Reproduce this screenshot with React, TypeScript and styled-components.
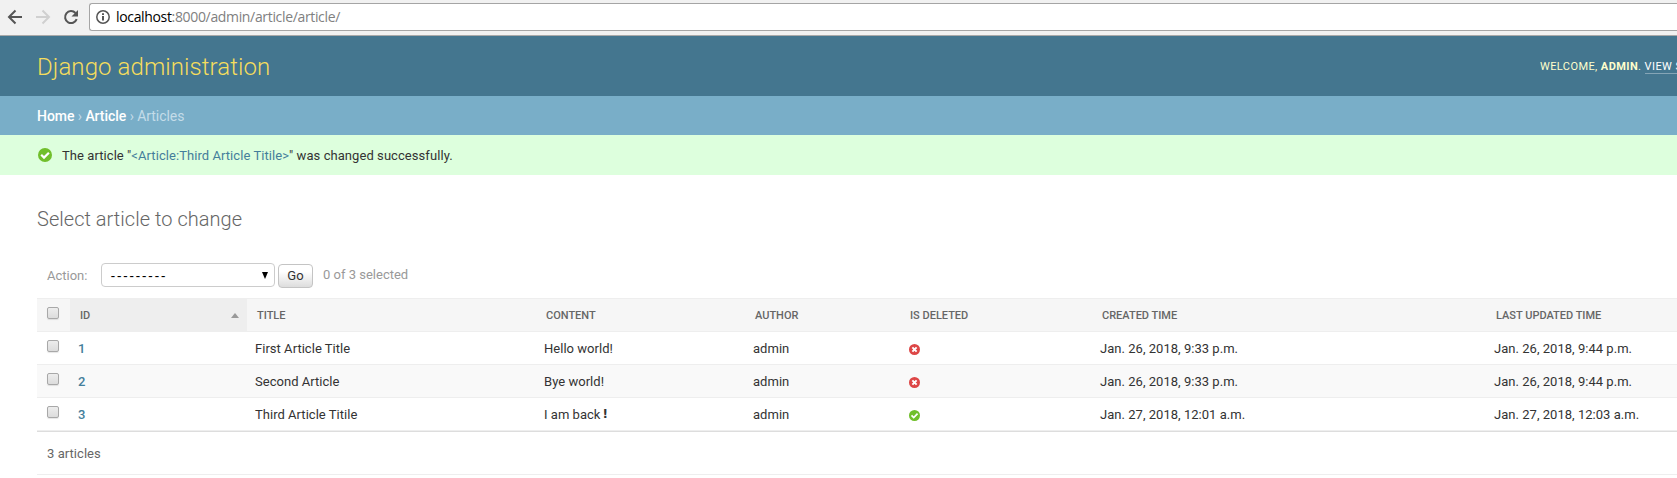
import React from 'react';
import styled, { createGlobalStyle } from 'styled-components';

const GlobalStyle = createGlobalStyle`
  * { box-sizing: border-box; }
  html, body { margin: 0; background: #fff; overflow: hidden; }
  body { font-family: Roboto, "Liberation Sans", sans-serif; font-size: 13px; color: #333; }
`;

const Page = styled.div`
  width: 1677px;
  height: 478px;
  overflow: hidden;
  background: #fff;
`;

const Toolbar = styled.div`
  display: flex;
  align-items: flex-start;
  height: 36px;
  padding: 3px 0 0 7px;
  background: #f1f1f1;
  border-bottom: 1px solid #a9a9a9;
`;

const NavIcons = styled.div`
  display: flex;
  gap: 12px;
  padding-top: 6px;
  width: 82px;
`;

const AddressBar = styled.div`
  display: flex;
  align-items: center;
  flex: 1;
  height: 28px;
  padding-left: 6px;
  background: #fff;
  border: 1px solid #a5a5a5;
  border-right: 0;
  border-radius: 3px 0 0 3px;
`;

const Url = styled.span`
  margin-left: 6px;
  font: 14px/26px "Open Sans", sans-serif;
  letter-spacing: -0.34px;
  color: #808080;
  white-space: nowrap;
`;

const Host = styled.span`
  color: #000;
`;

const Header = styled.header`
  display: flex;
  justify-content: space-between;
  height: 60px;
  padding-left: 37px;
  background: #44768f;
  color: #ffc;
`;

const Brand = styled.div`
  font-size: 24px;
  font-weight: 300;
  line-height: 62px;
  letter-spacing: 0.09px;
  color: #f5dd5d;
  white-space: nowrap;
`;

const UserTools = styled.div`
  width: 137px;
  overflow: hidden;
  padding-top: 23px;
  font-size: 11px;
  font-weight: 400;
  line-height: 15px;
  letter-spacing: 0.42px;
  white-space: nowrap;
  text-transform: uppercase;
`;

const ToolLink = styled.a`
  color: #fff;
  border-bottom: 1px solid rgba(255, 255, 255, 0.35);
`;

const Breadcrumbs = styled.nav`
  height: 39px;
  padding-left: 37px;
  background: #79aec8;
  color: #c4dce8;
  font-size: 14px;
  line-height: 40px;
  letter-spacing: -0.05px;
`;

const Crumb = styled.a`
  color: #fff;
  font-weight: 500;
`;

const Message = styled.div`
  display: flex;
  align-items: center;
  gap: 10px;
  height: 40px;
  padding-left: 38px;
  background: #dfd;
`;

const MessageText = styled.span`
  padding-top: 1px;
  line-height: 41px;
  letter-spacing: 0.065px;
`;

const MessageLink = styled.a`
  color: #447e9b;
`;

const Main = styled.main`
  padding: 32px 0 0 37px;
`;

const Title = styled.h1`
  margin: 0 0 32px;
  font-size: 20px;
  font-weight: 300;
  line-height: 24px;
  letter-spacing: 0.03px;
  color: #666;
`;

const Actions = styled.div`
  display: flex;
  align-items: flex-start;
  height: 35px;
  padding-left: 10px;
  line-height: 24px;
  color: #999;
`;

const ActionLabel = styled.label`
  width: 54px;
  padding-top: 1px;
`;

const Select = styled.div`
  display: flex;
  justify-content: space-between;
  align-items: center;
  width: 174px;
  height: 24px;
  padding: 0 6px 0 9px;
  border: 1px solid #ccc;
  border-radius: 4px;
  color: #000;
  font-size: 14px;
`;

const EmptyChoice = styled.span`
  padding-top: 1px;
  letter-spacing: 2.4px;
`;

const GoButton = styled.button`
  width: 35px;
  height: 24px;
  margin: 1px 10px 0 3px;
  padding: 0;
  border: 1px solid #c4c4c4;
  border-radius: 4px;
  background: linear-gradient(#fff 30%, #ddd);
  font: 13px/20px Roboto, sans-serif;
  color: #333;
`;

const Table = styled.div`
  border-bottom: 1px solid #ddd;
`;

const Row = styled.div<{ $alt?: boolean }>`
  display: grid;
  grid-template-columns: 33px 177px 289px 209px 155px 192px 394px 194px;
  height: 33px;
  border-bottom: 1px solid #eee;
  background: ${p => (p.$alt ? '#f9f9f9' : '#fff')};
`;

const HeadRow = styled(Row)`
  height: 34px;
  border-top: 1px solid #eee;
  background: #f6f6f6;
`;

const HeadCell = styled.div<{ $sorted?: boolean }>`
  display: flex;
  justify-content: space-between;
  align-items: center;
  padding: 1px 8px 0 10px;
  background: ${p => (p.$sorted ? '#eee' : 'transparent')};
  color: #666;
  font-size: 11px;
  font-weight: 500;
  text-transform: uppercase;
  white-space: nowrap;
`;

const Cell = styled.div`
  display: flex;
  padding: 0 8px;
  line-height: 33px;
  letter-spacing: 0.03px;
  white-space: nowrap;
`;

const IdLink = styled.a`
  color: #447e9b;
  font-weight: 500;
  font-size: 13px;
`;

const CheckCell = styled.div`
  padding: 8px 0 0 10px;
`;

const Checkbox = styled.div`
  width: 12px;
  height: 12px;
  border: 1px solid #a8a8a8;
  border-radius: 2px;
  background: linear-gradient(#ededed, #dcdcdc);
  box-shadow: 0 1px 1px rgba(0, 0, 0, 0.1);
`;

const IconCell = styled.div`
  padding: 12px 0 0 9px;
`;

const Icon = styled.svg`
  display: block;
  flex: none;
`;

const Bang = styled.span`
  margin-left: 2px;
  font-family: "DejaVu Sans", sans-serif;
  font-size: 12px;
  font-weight: 700;
  line-height: 33px;
`;

const Paginator = styled.div`
  height: 43px;
  padding-left: 10px;
  border-bottom: 1px solid #eee;
  line-height: 43px;
  letter-spacing: 0.05px;
  color: #666;
`;

const StatusIcon = ({ ok, size }: { ok: boolean; size: number }) => (
  <Icon width={size} height={size} viewBox="0 0 14 14">
    <circle cx="7" cy="7" r="7" fill={ok ? '#70bf2b' : '#dd4646'} />
    {ok ? (
      <path d="M3.2 6.8 6 9.6l4.9-4.9" fill="none" stroke="#fff" strokeWidth="2.2" />
    ) : (
      <path d="m4.3 4.3 5.4 5.4m0-5.4-5.4 5.4" fill="none" stroke="#fff" strokeWidth="2.5" />
    )}
  </Icon>
);

const columns = ['Title', 'Content', 'Author', 'Is deleted', 'Created time', 'Last updated time'];

const articles = [
  { id: 1, title: 'First Article Title', content: 'Hello world!', deleted: false, created: 'Jan. 26, 2018, 9:33 p.m.', updated: 'Jan. 26, 2018, 9:44 p.m.' },
  { id: 2, title: 'Second Article', content: 'Bye world!', deleted: false, created: 'Jan. 26, 2018, 9:33 p.m.', updated: 'Jan. 26, 2018, 9:44 p.m.' },
  { id: 3, title: 'Third Article Titile', content: 'I am back', bang: true, deleted: true, created: 'Jan. 27, 2018, 12:01 a.m.', updated: 'Jan. 27, 2018, 12:03 a.m.' },
];

export default function App() {
  return (
    <Page>
      <GlobalStyle />
      <Toolbar>
        <NavIcons>
          <Icon width="16" height="16" viewBox="0 0 16 16" fill="none" stroke="#555" strokeWidth="2">
            <path d="M15 8H2.5M8.5 1.5 2 8l6.500 6.500" />
          </Icon>
          <Icon width="16" height="16" viewBox="0 0 16 16" fill="none" stroke="#d0d0d0" strokeWidth="2">
            <path d="M1 8h12.500M7.500 1.500 14 8l-6.500 6.500" />
          </Icon>
          <Icon width="16" height="16" viewBox="0 0 16 16">
            <path d="M13.700 10.200A6 6 0 1 1 12.500 4" fill="none" stroke="#555" strokeWidth="2" />
            <path d="M15 1v6.500H8.500z" fill="#555" />
          </Icon>
        </NavIcons>
        <AddressBar>
          <Icon width="14" height="14" viewBox="0 0 14 14">
            <circle cx="7" cy="7" r="6.2" fill="none" stroke="#555" strokeWidth="1.5" />
            <path d="M6 6h2v4.500H6zM6 3.300h2v1.700H6z" fill="#555" />
          </Icon>
          <Url><Host>localhost</Host>:8000/admin/article/article/</Url>
        </AddressBar>
      </Toolbar>
      <Header>
        <Brand>Django administration</Brand>
        <UserTools>Welcome, <strong>admin</strong>. <ToolLink>View site</ToolLink></UserTools>
      </Header>
      <Breadcrumbs><Crumb>Home</Crumb> › <Crumb>Article</Crumb> › Articles</Breadcrumbs>
      <Message>
        <StatusIcon ok size={14} />
        <MessageText>The article "<MessageLink>&lt;Article:Third Article Titile&gt;</MessageLink>" was changed successfully.</MessageText>
      </Message>
      <Main>
        <Title>Select article to change</Title>
        <Actions>
          <ActionLabel>Action:</ActionLabel>
          <Select>
            <EmptyChoice>---------</EmptyChoice>
            <Icon width="6" height="7" viewBox="0 0 6 7"><path d="M0 0h6L3 7z" /></Icon>
          </Select>
          <GoButton>Go</GoButton>
          <span>0 of 3 selected</span>
        </Actions>
        <Table>
          <HeadRow>
            <CheckCell><Checkbox /></CheckCell>
            <HeadCell $sorted>
              ID
              <Icon width="8" height="5" viewBox="0 0 8 5"><path d="M4 0l4 5H0z" fill="#999" /></Icon>
            </HeadCell>
            {columns.map(c => <HeadCell key={c}>{c}</HeadCell>)}
          </HeadRow>
          {articles.map((a, i) => (
            <Row key={a.id} $alt={i % 2 === 1}>
              <CheckCell><Checkbox /></CheckCell>
              <Cell><IdLink>{a.id}</IdLink></Cell>
              <Cell>{a.title}</Cell>
              <Cell>{a.content}{a.bang && <Bang>!</Bang>}</Cell>
              <Cell>admin</Cell>
              <IconCell><StatusIcon ok={a.deleted} size={11} /></IconCell>
              <Cell>{a.created}</Cell>
              <Cell>{a.updated}</Cell>
            </Row>
          ))}
        </Table>
        <Paginator>3 articles</Paginator>
      </Main>
    </Page>
  );
}
